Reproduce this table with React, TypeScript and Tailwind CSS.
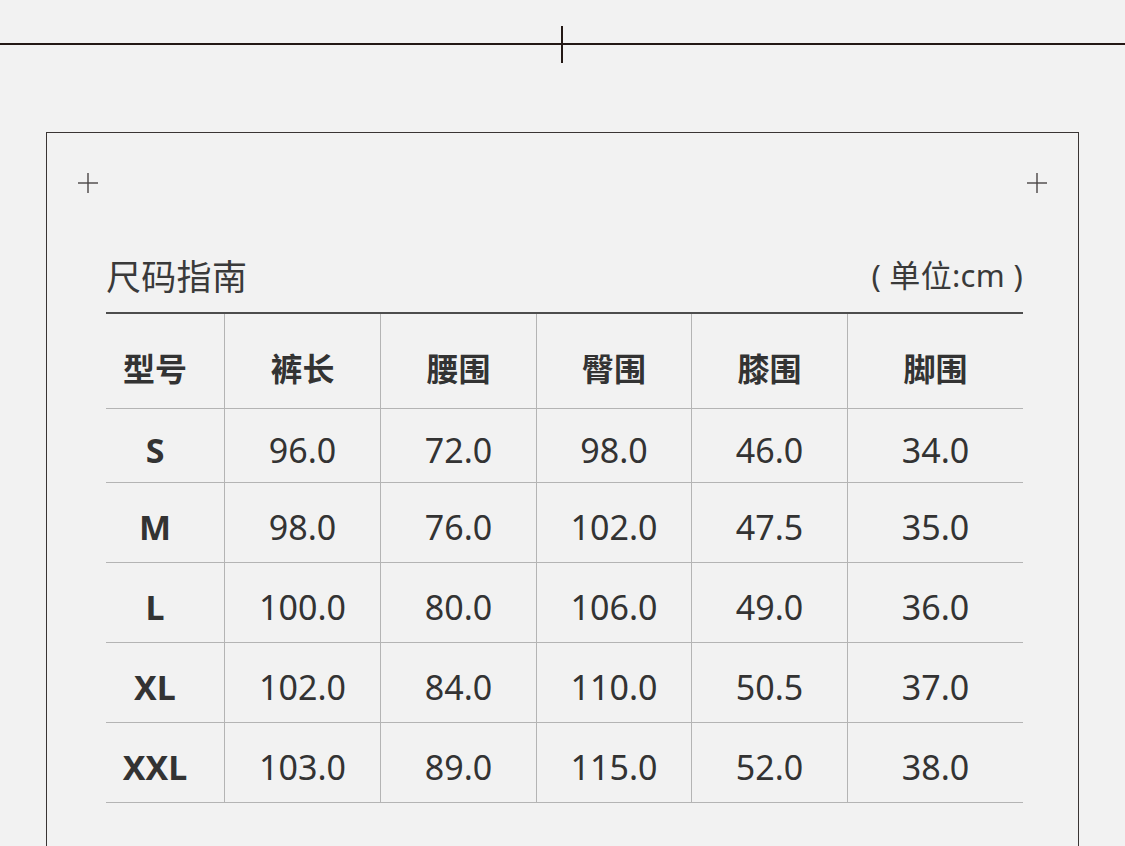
import React from "react";

const cols = ["w-[118px] pr-[20px]", "w-[156px]", "w-[156px]", "w-[155px]", "w-[156px]", "w-[176px]"];
const headers = ["型号", "裤长", "腰围", "臀围", "膝围", "脚围"];
const rows: string[][] = [
  ["S", "96.0", "72.0", "98.0", "46.0", "34.0"],
  ["M", "98.0", "76.0", "102.0", "47.5", "35.0"],
  ["L", "100.0", "80.0", "106.0", "49.0", "36.0"],
  ["XL", "102.0", "84.0", "110.0", "50.5", "37.0"],
  ["XXL", "103.0", "89.0", "115.0", "52.0", "38.0"],
];

function Plus() {
  return (
    <svg width="20" height="20" viewBox="0 0 20 20" className="block">
      <line x1="0" y1="10" x2="20" y2="10" stroke="#4a4545" strokeWidth="1.4" />
      <line x1="10" y1="0" x2="10" y2="20" stroke="#4a4545" strokeWidth="1.4" />
    </svg>
  );
}

export default function App() {
  const cjk = { fontFamily: '"Noto Sans CJK SC", "Noto Sans", sans-serif' };
  const latin = { fontFamily: '"Noto Sans", "Noto Sans CJK SC", sans-serif' };
  return (
    <div className="w-[1125px] h-[846px] overflow-hidden bg-[#f2f2f2] text-[#333333]" style={cjk}>
      {/* top rule with tick */}
      <div className="relative h-[132px]">
        <div className="absolute left-0 right-0 top-[43px] h-[2px] bg-[#231815]" />
        <div className="absolute left-[561px] top-[26px] w-[2px] h-[37px] bg-[#231815]" />
      </div>
      {/* framed card */}
      <div className="ml-[46px] w-[1033px] h-[714px] border-l border-t border-r border-[#3a3534]">
        <div className="flex justify-between px-[31px] pt-[40px]">
          <Plus />
          <Plus />
        </div>
        <div className="pl-[59px] pr-[55px]">
          <div className="h-[119px] flex items-end justify-between pb-[20px]">
            <div className="text-[35px] leading-none tracking-[0.3px] text-[#3a3a3a]">尺码指南</div>
            <div className="text-[31px] leading-none tracking-[0.3px] text-[#3a3a3a] mb-[1px]" style={latin}>( 单位:cm )</div>
          </div>
          <div className="h-[2px] bg-[#4d4d4d]" />
          <div className="flex">
            {headers.map((h, i) => (
              <div
                key={h}
                className={`${cols[i]} h-[95px] pt-[12px] flex items-center justify-center text-[32px] font-bold border-b border-[#b4b4b4] ${i > 0 ? "border-l" : ""}`}
              >
                {h}
              </div>
            ))}
          </div>
          {rows.map((r, ri) => (
            <div key={r[0]} className="flex" style={latin}>
              {r.map((c, i) => (
                <div
                  key={i}
                  className={`${cols[i]} ${ri === 0 ? "h-[74px]" : "h-[80px]"} pt-[8px] flex items-center justify-center text-[34px] leading-none border-b border-[#b4b4b4] ${i > 0 ? "border-l" : ""} ${i === 0 ? "font-bold" : "font-normal"}`}
                >
                  {c}
                </div>
              ))}
            </div>
          ))}
        </div>
      </div>
    </div>
  );
}
